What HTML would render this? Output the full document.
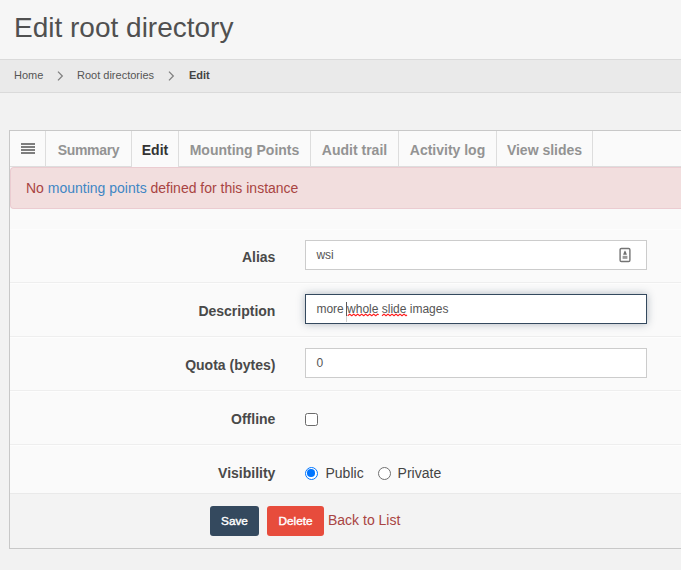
<!DOCTYPE html>
<html><head><meta charset="utf-8">
<style>
*{box-sizing:border-box}
html,body{margin:0;padding:0}
body{width:681px;height:570px;overflow:hidden;background:#f2f2f2;font-family:"Liberation Sans",Arial,sans-serif;color:#444;position:relative}
h1{position:absolute;left:14px;top:10px;margin:0;font-size:28px;font-weight:normal;color:#505050;line-height:36px;white-space:nowrap}
.bc{position:absolute;left:0;top:59px;width:681px;height:34px;background:#eaeaea;border-top:1px solid #dadada;border-bottom:1px solid #dadada;font-size:11px;color:#555}
.bc span{position:absolute;top:8px;line-height:14px;white-space:nowrap}
.bc svg{position:absolute;top:10px}
.panel{position:absolute;left:9px;top:130px;width:680px;height:419px;background:#fafafa;border:1px solid #c8c8c8}
.tabs{position:absolute;left:0;top:0;height:36px;width:100%;border-bottom:1px solid #ddd;background:#fafafa}
.tab{position:absolute;top:0;height:35px;border-right:1px solid #ddd;font-weight:bold;font-size:14px;color:#939393;line-height:16px;padding-top:11px;text-align:center;white-space:nowrap}
.tab.active{color:#333;height:36px;background:#fafafa}
.alert{position:absolute;left:0;top:36px;width:100%;height:42px;background:#f2dede;border:1px solid #ebccd1;border-right:0;border-radius:4px 0 0 4px;color:#a94442;font-size:14px;line-height:16px;padding:12px 0 0 15px;white-space:nowrap}
.alert a{color:#3f86c4;text-decoration:none}
.row{position:absolute;left:0;width:100%;height:54px;border-top:1px solid #fdfdfd;border-bottom:1px solid #eee;background:#fafafa}
.row label.l{position:absolute;left:0;width:265.4px;text-align:right;top:19px;font-weight:bold;font-size:14px;color:#494949;line-height:16px;white-space:nowrap}
.inp{position:absolute;left:295px;top:10px;width:342px;height:30px;background:#fff;border:1px solid #ccc;font-size:12px;color:#555;line-height:14px;padding:7px 0 0 10.4px;white-space:nowrap}
.inp.focus{border:1px solid #34495e;box-shadow:0 0 8px rgba(52,73,94,.38)}
.footer{position:absolute;left:0;top:362px;width:100%;height:55px;background:#f3f3f3;border-top:1px solid #e9e9e9}
.btn{position:absolute;top:12px;height:30px;border-radius:3px;color:#fff;font-size:11.8px;font-weight:normal;-webkit-text-stroke:0.4px #fff;line-height:14px;padding-top:8px;text-align:center}
.t14{position:absolute;font-size:14px;line-height:16px;color:#444;white-space:nowrap}
</style></head><body>
<div style="position:absolute;left:0;top:0;width:681px;height:59px;background:#f6f6f6"></div>
<h1>Edit root directory</h1>
<div class="bc">
<span style="left:14px">Home</span>
<svg style="left:56px" width="8" height="12" viewBox="0 0 8 12"><path d="M2 1.6 L6.3 6 L2 10.4" fill="none" stroke="#808080" stroke-width="1.3"/></svg>
<span style="left:77px">Root directories</span>
<svg style="left:167px" width="8" height="12" viewBox="0 0 8 12"><path d="M2 1.6 L6.3 6 L2 10.4" fill="none" stroke="#808080" stroke-width="1.3"/></svg>
<span style="left:189px;font-weight:bold;color:#444">Edit</span>
</div>
<div class="panel">
 <div class="tabs">
  <div class="tab" style="left:0;width:36px"><svg width="14" height="11" viewBox="0 0 14 11" style="position:absolute;left:11px;top:12px"><path d="M0 1h14M0 4h14M0 7h14M0 10h14" stroke="#555" stroke-width="1.6"/></svg></div>
  <div class="tab" style="left:36px;width:86px;letter-spacing:-0.3px">Summary</div>
  <div class="tab active" style="left:122px;width:47px">Edit</div>
  <div class="tab" style="left:169px;width:132px">Mounting Points</div>
  <div class="tab" style="left:301px;width:88px">Audit trail</div>
  <div class="tab" style="left:389px;width:98px">Activity log</div>
  <div class="tab" style="left:487px;width:96px">View slides</div>
 </div>
 <div class="alert">No <a>mounting points</a> defined for this instance</div>
 <div class="row" style="top:98px">
   <label class="l">Alias</label>
   <div class="inp">wsi</div>
   <svg width="12" height="16" viewBox="0 -0.45 12 16" style="position:absolute;left:609px;top:17px"><rect x="1.1" y="1" width="9.8" height="13" rx="1.3" fill="#fff" stroke="#747474" stroke-width="1.4"/><path d="M6 3 L6.9 4.6 L7.9 7.3 H4.1 L5.1 4.6Z" fill="#707070"/><path d="M3.6 8.4h4.8v3h-4.8z" fill="#9a9a9a"/></svg>
 </div>
 <div class="row" style="top:152px">
   <label class="l">Description</label>
   <div class="inp focus">more whole slide images<i style="position:absolute;left:40px;top:7px;width:1px;height:14px;background:#5a5a5a"></i><i style="position:absolute;left:40px;top:21px;width:1px;height:6px;background:#d0d0d0"></i>
   <svg width="70" height="5" viewBox="0 0 70 5" style="position:absolute;left:41px;top:17.5px" fill="none" stroke="#ff1a1a" stroke-width="1.15" stroke-linejoin="round"><path d="M0.7 2.7 l2 -1.6 l2 1.6 l2 -1.6 l2 1.6 l2 -1.6 l2 1.6 l2 -1.6 l2 1.6 l2 -1.6 l2 1.6 l2 -1.6 l2 1.6 l2 -1.6 l2 1.6 l2 -1.6 l1 0.8"/><path d="M35 2.7 l2 -1.6 l2 1.6 l2 -1.6 l2 1.6 l2 -1.6 l2 1.6 l2 -1.6 l2 1.6 l2 -1.6 l2 1.6 l2 -1.6 l2 1.6 l1 -0.8"/></svg>
   </div>
 </div>
 <div class="row" style="top:206px">
   <label class="l">Quota (bytes)</label>
   <div class="inp">0</div>
 </div>
 <div class="row" style="top:260px">
   <label class="l">Offline</label>
   <div style="position:absolute;left:295px;top:21px;width:13px;height:13px;border:1px solid #6b6b6b;border-radius:2.5px;background:#fff"></div>
 </div>
 <div class="row" style="top:314px">
   <label class="l">Visibility</label>
   <div style="position:absolute;left:295px;top:21px;width:13px;height:13px;border:1.3px solid #0075ff;border-radius:50%;background:#fff"><i style="position:absolute;left:1.45px;top:1.45px;width:7.5px;height:7.5px;border-radius:50%;background:#0075ff"></i></div>
   <span class="t14" style="left:315.5px;top:19px">Public</span>
   <div style="position:absolute;left:368px;top:21px;width:13px;height:13px;border:1.25px solid #707070;border-radius:50%;background:#fff"></div>
   <span class="t14" style="left:387.6px;top:19px">Private</span>
 </div>
 <div class="footer">
   <div class="btn" style="left:200px;width:49px;background:#34495e">Save</div>
   <div class="btn" style="left:257px;width:57px;background:#e74c3c">Delete</div>
   <span class="t14" style="left:318px;top:18px;color:#a94442">Back to List</span>
 </div>
</div>
</body></html>
